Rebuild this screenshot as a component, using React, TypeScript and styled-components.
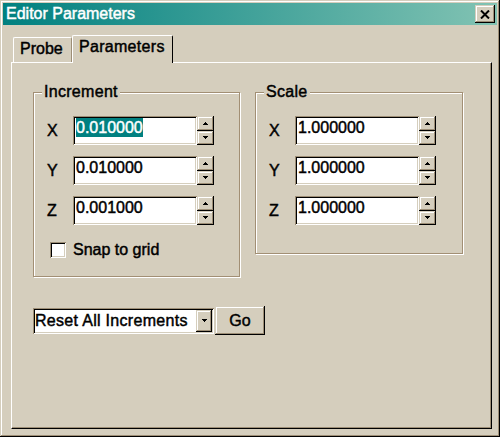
import React from 'react';
import styled, { createGlobalStyle, css } from 'styled-components';

const BG = '#d5cebd';
const SHADOW = '#9d8e76';

const GlobalStyle = createGlobalStyle`
  html, body {
    margin: 0;
    padding: 0;
    background: ${BG};
  }
`;

// bevels
const raised = css`
  box-shadow:
    inset -1px -1px 0 #000,
    inset 1px 1px 0 ${BG},
    inset -2px -2px 0 ${SHADOW},
    inset 2px 2px 0 #fff;
`;

const sunken = css`
  box-shadow:
    inset 1px 1px 0 ${SHADOW},
    inset -1px -1px 0 #fff,
    inset 2px 2px 0 #000,
    inset -2px -2px 0 ${BG};
`;

// Window frame
const Window = styled.div`
  box-sizing: border-box;
  width: 500px;
  height: 437px;
  padding: 3px;
  display: flex;
  flex-direction: column;
  background: ${BG};
  font-family: 'Liberation Sans', Arial, sans-serif;
  font-size: 16px;
  color: #000;
  -webkit-text-stroke: 0.45px;
  ${raised};
`;

const TitleBar = styled.div`
  height: 22px;
  display: flex;
  align-items: center;
  justify-content: space-between;
  padding: 0 2px 0 3px;
  background: linear-gradient(to right, #008080, #82c3b3);
`;

const Title = styled.span`
  color: #fff;
  line-height: 22px;
`;

const CloseButton = styled.button`
  width: 20px;
  height: 18px;
  padding: 0;
  border: 0;
  background: ${BG};
  display: flex;
  align-items: center;
  justify-content: center;
  ${raised};
`;

const Body = styled.div`
  flex: 1;
  display: flex;
  flex-direction: column;
  padding: 10px 5px 5px 8px;
`;

// Tabs
const TabStrip = styled.div`
  display: flex;
  align-items: flex-end;
  padding-left: 2px;
`;

const Tab = styled.div<{ $active?: boolean; $w: number }>`
  box-sizing: border-box;
  width: ${({ $w }) => $w}px;
  height: ${({ $active }) => ($active ? 28 : 25)}px;
  margin-bottom: ${({ $active }) => ($active ? -1 : 0)}px;
  padding: 2px 0 0 6px;
  line-height: 18px;
  letter-spacing: ${({ $active }) => ($active ? 0.3 : 0)}px;
  background: ${BG};
  border-top: 1px solid #fff;
  border-left: 1px solid #fff;
  border-right: 1px solid ${({ $active }) => ($active ? '#000' : SHADOW)};
  border-radius: 2px 2px 0 0;
  position: relative;
  z-index: ${({ $active }) => ($active ? 1 : 0)};
`;

const Panel = styled.div`
  flex: 1;
  display: flex;
  flex-direction: column;
  padding: 29px 0 0 21px;
  border-top: 1px solid #fff;
  border-left: 1px solid #fff;
  border-right: 1px solid #000;
  border-bottom: 1px solid #000;
  box-shadow: inset -1px -1px 0 ${SHADOW};
`;

// Group boxes
const GroupsRow = styled.div`
  display: flex;
  align-items: flex-start;
  gap: 15px;
`;

const GroupBox = styled.div<{ $w: number; $pb: number }>`
  box-sizing: border-box;
  width: ${({ $w }) => $w}px;
  padding: 0 0 ${({ $pb }) => $pb}px 13px;
  border: 1px solid #a28f74;
  box-shadow: inset 1px 1px 0 #fff, 1px 1px 0 #fff;
`;

const Caption = styled.div`
  width: fit-content;
  margin: -9px 0 0 -5px;
  padding: 0 2px;
  line-height: 16px;
  letter-spacing: 0.3px;
  background: ${BG};
`;

const FieldRows = styled.div`
  margin-top: 16px;
  display: flex;
  flex-direction: column;
  gap: 11px;
`;

const FieldRow = styled.div`
  display: flex;
  align-items: center;
  height: 29px;
`;

const AxisLabel = styled.span`
  width: 26px;
`;

const TextField = styled.div`
  box-sizing: border-box;
  width: 124px;
  height: 29px;
  padding: 0 2px 0 3px;
  line-height: 23px;
  background: #fff;
  white-space: nowrap;
  ${sunken};
`;

const Selection = styled.span`
  padding: 1px 0;
  background: #008080;
  color: #fff;
`;

const Spinner = styled.div`
  width: 17px;
  height: 29px;
  display: flex;
  flex-direction: column;
`;

const SpinButton = styled.div`
  flex: 1;
  display: flex;
  align-items: center;
  justify-content: center;
  background: ${BG};
  ${raised};
`;

const CheckRow = styled.label`
  display: flex;
  align-items: center;
  gap: 7px;
  margin-top: 17px;
  padding-left: 3px;
  line-height: 16px;
`;

const CheckBox = styled.span`
  width: 16px;
  height: 16px;
  background: #fff;
  ${sunken};
`;

// Bottom actions
const ActionRow = styled.div`
  display: flex;
  align-items: center;
  gap: 1px;
  margin-top: 29px;
`;

const Combo = styled.div`
  box-sizing: border-box;
  width: 181px;
  height: 26px;
  padding: 2px;
  display: flex;
  background: #fff;
  ${sunken};
`;

const ComboText = styled.span`
  flex: 1;
  line-height: 22px;
  letter-spacing: 0.3px;
  white-space: nowrap;
`;

const ComboButton = styled.div`
  width: 16px;
  display: flex;
  align-items: center;
  justify-content: center;
  background: ${BG};
  ${raised};
`;

const GoButton = styled.button`
  width: 50px;
  height: 29px;
  padding: 0;
  border: 0;
  background: ${BG};
  font: inherit;
  color: #000;
  line-height: 29px;
  ${raised};
`;

const Arrow = ({ up }: { up?: boolean }) => (
  <svg width="5" height="3" viewBox="0 0 5 3" shapeRendering="crispEdges">
    <polygon points={up ? '0,3 2.5,0 5,3' : '0,0 5,0 2.5,3'} fill="#000" />
  </svg>
);

const CloseGlyph = () => (
  <svg width="10" height="9" viewBox="0 0 10 9">
    <path d="M1 0.5 L9 8.5 M9 0.5 L1 8.5" stroke="#000" strokeWidth="2" />
  </svg>
);

type Field = { axis: string; value: string; selected?: boolean };

const increments: Field[] = [
  { axis: 'X', value: '0.010000', selected: true },
  { axis: 'Y', value: '0.010000' },
  { axis: 'Z', value: '0.001000' },
];

const scales: Field[] = [
  { axis: 'X', value: '1.000000' },
  { axis: 'Y', value: '1.000000' },
  { axis: 'Z', value: '1.000000' },
];

function SpinField({ field }: { field: Field }) {
  return (
    <FieldRow>
      <AxisLabel>{field.axis}</AxisLabel>
      <TextField>{field.selected ? <Selection>{field.value}</Selection> : field.value}</TextField>
      <Spinner>
        <SpinButton>
          <Arrow up />
        </SpinButton>
        <SpinButton>
          <Arrow />
        </SpinButton>
      </Spinner>
    </FieldRow>
  );
}

export default function App() {
  return (
    <>
      <GlobalStyle />
      <Window>
        <TitleBar>
          <Title>Editor Parameters</Title>
          <CloseButton>
            <CloseGlyph />
          </CloseButton>
        </TitleBar>
        <Body>
          <TabStrip>
            <Tab $w={59}>Probe</Tab>
            <Tab $w={101} $active>
              Parameters
            </Tab>
          </TabStrip>
          <Panel>
            <GroupsRow>
              <GroupBox $w={207} $pb={18}>
                <Caption>Increment</Caption>
                <FieldRows>
                  {increments.map((f) => (
                    <SpinField key={f.axis} field={f} />
                  ))}
                </FieldRows>
                <CheckRow>
                  <CheckBox />
                  Snap to grid
                </CheckRow>
              </GroupBox>
              <GroupBox $w={208} $pb={28}>
                <Caption>Scale</Caption>
                <FieldRows>
                  {scales.map((f) => (
                    <SpinField key={f.axis} field={f} />
                  ))}
                </FieldRows>
              </GroupBox>
            </GroupsRow>
            <ActionRow>
              <Combo>
                <ComboText>Reset All Increments</ComboText>
                <ComboButton>
                  <Arrow />
                </ComboButton>
              </Combo>
              <GoButton>Go</GoButton>
            </ActionRow>
          </Panel>
        </Body>
      </Window>
    </>
  );
}
